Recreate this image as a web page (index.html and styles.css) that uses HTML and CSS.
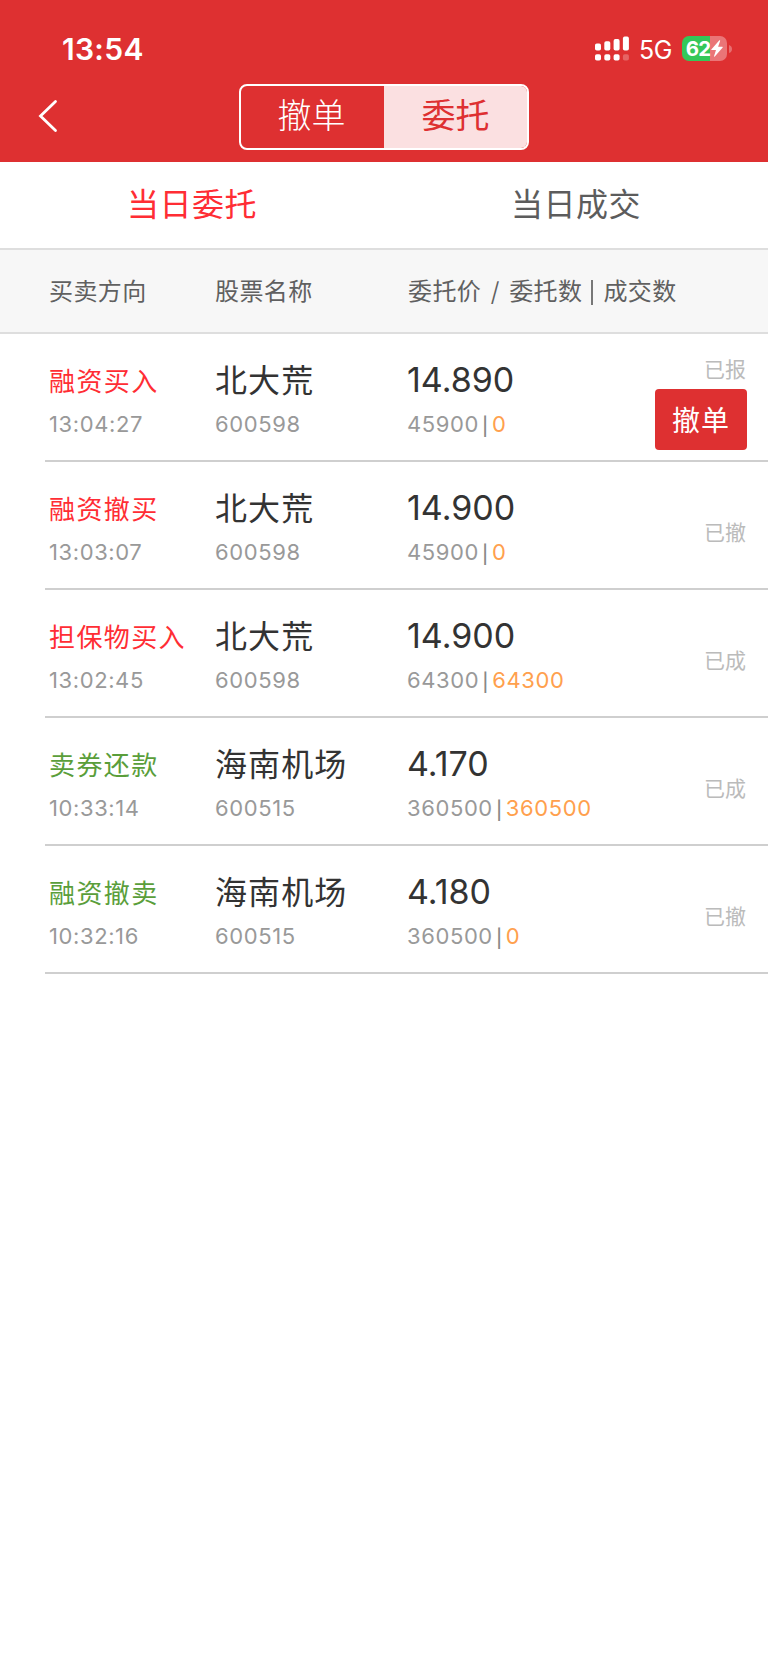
FILE: index.html
```html
<!DOCTYPE html>
<html lang="zh-CN">
<head>
    <meta charset="UTF-8">
    <meta name="viewport" content="width=device-width, initial-scale=1.0">
    <title>当日委托</title>
    <link rel="stylesheet" href="styles.css">
</head>
<body>
    <header class="header">
        <div class="status-bar">
            <span class="clock">13:54</span>
            <div class="indicators">
                <svg class="signal" width="34" height="25" viewBox="0 0 34 25" fill="#fff">
                    <rect x="0" y="7.5" width="6" height="7" rx="1.8"/>
                    <rect x="9.3" y="5.3" width="6" height="9.2" rx="1.8"/>
                    <rect x="18.6" y="3.1" width="6" height="11.4" rx="1.8"/>
                    <rect x="27.9" y="0.6" width="6" height="13.9" rx="1.8"/>
                    <rect x="0" y="18.3" width="6" height="6.3" rx="1.8"/>
                    <rect x="9.3" y="18.3" width="6" height="6.3" rx="1.8"/>
                    <rect x="18.6" y="18.3" width="6" height="6.3" rx="1.8"/>
                    <rect x="27.9" y="18.3" width="6" height="6.3" rx="1.8" opacity="0.25"/>
                </svg>
                <span class="network">5G</span>
                <div class="battery">
                    <div class="battery-body">
                        <span>62</span>
                        <svg width="12" height="17" viewBox="0 0 12 17" fill="#fff">
                            <path d="M8.4 0.3 L0.3 9.4 Q0 10 0.7 10 L5 10 L3 16.2 Q3.1 17 3.8 16.5 L11.7 7.5 Q12 6.8 11.3 6.8 L7.1 6.8 L9.2 0.8 Q9.1 0 8.4 0.3 Z"/>
                        </svg>
                    </div>
                    <svg class="battery-cap" width="3" height="8" viewBox="0 0 3 8">
                        <path d="M0 0 Q3 1 3 4 Q3 7 0 8 Z" fill="#fff" opacity="0.3"/>
                    </svg>
                </div>
            </div>
        </div>
        <div class="nav">
            <svg class="back" width="20" height="34" viewBox="0 0 20 34">
                <path d="M17.5 2.5 L2.5 17 L17.5 31.5" fill="none" stroke="#fff" stroke-width="2.8" stroke-linecap="round"/>
            </svg>
            <div class="segment">
                <div class="segment-item">撤单</div>
                <div class="segment-item active">委托</div>
            </div>
        </div>
    </header>

    <div class="tabs">
        <div class="tab active">当日委托</div>
        <div class="tab">当日成交</div>
    </div>

    <div class="columns">
        <span>买卖方向</span>
        <span>股票名称</span>
        <span class="col-price">委托价<i class="slash">/</i>委托数<i class="bar"></i>成交数</span>
    </div>

    <div class="list">
        <div class="row">
            <div>
                <p class="direction buy">融资买入</p>
                <p class="sub">13:04:27</p>
            </div>
            <div>
                <p class="name">北大荒</p>
                <p class="sub">600598</p>
            </div>
            <div>
                <p class="price">14.890</p>
                <p class="sub">45900<span class="pipe">|</span><span class="deal">0</span></p>
            </div>
            <div class="state has-button">
                <span>已报</span>
                <button class="cancel">撤单</button>
            </div>
        </div>
        <div class="row">
            <div>
                <p class="direction buy">融资撤买</p>
                <p class="sub">13:03:07</p>
            </div>
            <div>
                <p class="name">北大荒</p>
                <p class="sub">600598</p>
            </div>
            <div>
                <p class="price">14.900</p>
                <p class="sub">45900<span class="pipe">|</span><span class="deal">0</span></p>
            </div>
            <div class="state"><span>已撤</span></div>
        </div>
        <div class="row">
            <div>
                <p class="direction buy">担保物买入</p>
                <p class="sub">13:02:45</p>
            </div>
            <div>
                <p class="name">北大荒</p>
                <p class="sub">600598</p>
            </div>
            <div>
                <p class="price">14.900</p>
                <p class="sub">64300<span class="pipe">|</span><span class="deal">64300</span></p>
            </div>
            <div class="state"><span>已成</span></div>
        </div>
        <div class="row">
            <div>
                <p class="direction sell">卖券还款</p>
                <p class="sub">10:33:14</p>
            </div>
            <div>
                <p class="name">海南机场</p>
                <p class="sub">600515</p>
            </div>
            <div>
                <p class="price">4.170</p>
                <p class="sub">360500<span class="pipe">|</span><span class="deal">360500</span></p>
            </div>
            <div class="state"><span>已成</span></div>
        </div>
        <div class="row">
            <div>
                <p class="direction sell">融资撤卖</p>
                <p class="sub">10:32:16</p>
            </div>
            <div>
                <p class="name">海南机场</p>
                <p class="sub">600515</p>
            </div>
            <div>
                <p class="price">4.180</p>
                <p class="sub">360500<span class="pipe">|</span><span class="deal">0</span></p>
            </div>
            <div class="state"><span>已撤</span></div>
        </div>
    </div>
</body>
</html>
```
FILE: styles.css
```css
* {
    box-sizing: border-box;
}

body {
    font-family: Inter, "Noto Sans CJK SC", sans-serif;
    background-color: #fff;
    color: #333;
    margin: 0;
    min-height: 100vh;
}

p {
    margin: 0;
}

/* Header */
.header {
    height: 162px;
    background-color: #de3031;
    color: #fff;
}

.status-bar {
    display: flex;
    justify-content: space-between;
    height: 84px;
    padding: 36px 36px 0 62px;
}

.clock {
    font-size: 30px;
    font-weight: 600;
    line-height: 26px;
    letter-spacing: 0.3px;
}

.indicators {
    display: flex;
    height: 25px;
    align-items: center;
}

.network {
    font-size: 25px;
    line-height: 25px;
    margin-left: 10px;
    width: 43px;
    padding-top: 3px;
    letter-spacing: -0.5px;
}

.battery {
    display: flex;
    align-items: center;
    gap: 2px;
}

.battery-body {
    display: flex;
    align-items: center;
    justify-content: center;
    gap: 1px;
    width: 45px;
    height: 25px;
    border-radius: 7px;
    background: linear-gradient(to right, #34c759 62%, #ea7577 62%);
    font-size: 20.5px;
    font-weight: 700;
    letter-spacing: -0.8px;
}

.nav {
    display: grid;
    grid-template-columns: 239px 290px;
}

.back {
    margin: 15px 0 0 38px;
}

.segment {
    display: flex;
    height: 66px;
    border: 2px solid #fff;
    border-radius: 8px;
    overflow: hidden;
}

.segment-item {
    width: 50%;
    padding-right: 2px;
    text-align: center;
    font-size: 34px;
    font-weight: 300;
    line-height: 60px;
}

.segment-item.active {
    padding-right: 0;
    background-color: #fbe0e1;
    color: #de3031;
    font-weight: 400;
}

/* Tabs */
.tabs {
    display: flex;
    height: 88px;
    border-bottom: 2px solid #dedede;
}

.tab {
    flex: 1;
    text-align: center;
    font-size: 32px;
    line-height: 86px;
    letter-spacing: 0.5px;
    color: #5c5c5c;
}

.tab.active {
    color: #ff2d34;
}

/* Table head */
.columns {
    display: grid;
    grid-template-columns: 166px 193px 1fr;
    height: 84px;
    padding-left: 49px;
    background-color: #f7f7f7;
    border-bottom: 2px solid #dedede;
    font-size: 24px;
    line-height: 84px;
    letter-spacing: 0.4px;
    color: #606060;
}

.col-price {
    display: flex;
    align-items: center;
}

.slash {
    font-style: normal;
    font-size: 26px;
    font-weight: 300;
    width: 28px;
    text-align: center;
}

.bar {
    width: 2px;
    height: 25px;
    margin: 0 10px 0 9px;
    background-color: #777;
}

/* Orders */
.list {
    padding-left: 45px;
}

.row {
    display: grid;
    grid-template-columns: 166px 192px 1fr auto;
    height: 128px;
    padding: 24px 21px 0 4px;
    border-bottom: 2px solid #cfcfcf;
}

.direction,
.name,
.price {
    height: 44px;
    line-height: 44px;
    white-space: nowrap;
}

.direction {
    padding-top: 2px;
    font-size: 26px;
    letter-spacing: 1.4px;
}

.buy {
    color: #ff2d34;
}

.sell {
    color: #5a9e3a;
}

.name {
    padding-top: 1px;
    font-size: 32px;
    letter-spacing: 1.1px;
}

.price {
    font-size: 34px;
}

.sub {
    font-size: 22px;
    line-height: 44px;
    letter-spacing: 0.6px;
    color: #999;
}

.pipe {
    display: inline-block;
    width: 13px;
    font-size: 18px;
    font-weight: 500;
    line-height: 1;
    text-align: center;
    vertical-align: -1px;
    color: #888;
}

.deal {
    color: #ffa04d;
}

.state {
    display: flex;
    flex-direction: column;
    align-items: flex-end;
    padding-top: 35px;
    font-size: 21px;
    line-height: 24px;
    color: #bbb;
}

.state span {
    padding-right: 1px;
}

.state.has-button {
    padding-top: 0;
}

.cancel {
    width: 92px;
    height: 61px;
    margin-top: 7px;
    padding: 0 0 2px 0;
    border: none;
    border-radius: 4px;
    background-color: #de3031;
    color: #fff;
    font-family: inherit;
    font-size: 28px;
    letter-spacing: 1px;
}
```
